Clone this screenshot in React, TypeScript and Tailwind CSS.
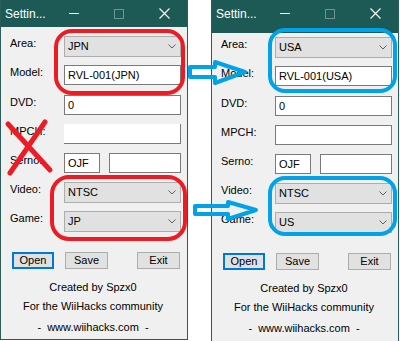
import React from "react";

type Row = { label: string; kind: "combo" | "input" | "serno"; value?: string; value2?: string; blank?: boolean };

const font = { fontFamily: '"Liberation Sans", Arial, sans-serif' };

function Chevron() {
  return (
    <svg width="8" height="5" viewBox="0 0 8 5" className="mr-[4px]">
      <path d="M0.5 0.5 L4 4 L7.5 0.5" fill="none" stroke="#606060" strokeWidth="1" />
    </svg>
  );
}

function Combo({ value }: { value: string }) {
  return (
    <div className="flex h-[21px] w-[117px] items-center justify-between border border-[#adadad] bg-[#e1e1e1] pl-[3px] text-[11px] text-black">
      <span>{value}</span>
      <Chevron />
    </div>
  );
}

function TextBox({ value, width, blank }: { value?: string; width: number; blank?: boolean }) {
  return (
    <div
      className={
        "flex h-[20px] items-center bg-white pl-[3px] text-[11px] text-black " +
        (blank ? "border-r border-b border-[#7a7a7a]" : "border border-[#7a7a7a]")
      }
      style={{ width }}
    >
      {value}
    </div>
  );
}

function TitleBar({ tall }: { tall?: boolean }) {
  return (
    <div className={"flex shrink-0 bg-[#1e5a55] text-white " + (tall ? "h-[33px]" : "h-[27px]")}>
      <div className="flex h-[27px] items-center">
        <span className="w-[60px] pl-[4px] text-[12px]">Settin...</span>
        <div className="ml-[8px] h-[1px] w-[10px] bg-white" />
        <div className="ml-[35px] h-[10px] w-[10px] border border-[#6d9692]" />
        <svg width="11" height="11" viewBox="0 0 11 11" className="ml-[35px]">
          <path d="M0.5 0.5 L10.5 10.5 M10.5 0.5 L0.5 10.5" stroke="white" strokeWidth="1.1" />
        </svg>
      </div>
    </div>
  );
}

function Settings({ rows, last }: { rows: Row[]; last?: boolean }) {
  return (
    <div
      className={
        "flex w-[188px] flex-col border-x border-[#2b5c57] bg-[#f0f0f0] " +
        (last ? "h-[341px]" : "h-[340px] border-b")
      }
      style={font}
    >
      <TitleBar tall={last} />
      <div className={"flex flex-col pl-[9px] " + (last ? "pt-[4px]" : "pt-[9px]")}>
        {rows.map((r, i) => (
          <div key={r.label} className={"flex h-[21px] items-start " + (i === 0 ? "" : i === 2 ? "mt-[9px]" : "mt-[8px]")}>
            <span className="w-[54px] pt-[1px] text-[11px] leading-[13px] text-black">{r.label}</span>
            {r.kind === "combo" && <Combo value={r.value || ""} />}
            {r.kind === "input" && <TextBox value={r.value} width={117} blank={r.blank} />}
            {r.kind === "serno" && (
              <div className="flex gap-[9px]">
                <TextBox value={r.value} width={36} />
                <TextBox value={r.value2} width={72} />
              </div>
            )}
          </div>
        ))}
        <div className="mt-[20px] flex h-[17px] text-[11px] text-black">
          <div className="ml-[2px] flex w-[42px] items-center justify-center border-2 border-[#0078d7] bg-[#e1e1e1]">Open</div>
          <div className="ml-[11px] flex w-[43px] items-center justify-center border border-[#adadad] bg-[#e1e1e1]">Save</div>
          <div className="ml-[29px] flex w-[43px] items-center justify-center border border-[#adadad] bg-[#e1e1e1]">Exit</div>
        </div>
      </div>
      <div className="flex flex-col items-center pr-[2px] text-[11px] leading-[13px] text-black">
        <span className="mt-[12px]">Created by Spzx0</span>
        <span className="mt-[6px]">For the WiiHacks community</span>
        <span className="mt-[8px] whitespace-pre">-  www.wiihacks.com  -</span>
      </div>
    </div>
  );
}

function Marks() {
  const red = "#ed1c24";
  const blue = "#00a2e8";
  return (
    <svg width="400" height="341" viewBox="0 0 400 341" className="pointer-events-none absolute left-0 top-0">
      <rect x="56" y="31" width="127" height="62" rx="16" fill="none" stroke={red} strokeWidth="4" />
      <rect x="52" y="177" width="133" height="62" rx="17" fill="none" stroke={red} strokeWidth="4" />
      <path d="M8 124 L50 170 M45 122 L10 173" stroke={red} strokeWidth="5" strokeLinecap="round" />
      <rect x="270" y="30" width="125" height="61" rx="15" fill="none" stroke={blue} strokeWidth="4" />
      <rect x="270" y="178" width="125" height="56" rx="15" fill="none" stroke={blue} strokeWidth="4" />
      <path
        d="M190 67 L215 67 L215 62 L245 72 L215 83 L215 77 L190 77 Z"
        fill="none"
        stroke={blue}
        strokeWidth="4"
        strokeLinejoin="round"
      />
      <path
        d="M195 206 L228 206 L228 202 L256 210 L228 219 L228 214 L195 214 Z"
        fill="none"
        stroke={blue}
        strokeWidth="4"
        strokeLinejoin="round"
      />
    </svg>
  );
}

const left: Row[] = [
  { label: "Area:", kind: "combo", value: "JPN" },
  { label: "Model:", kind: "input", value: "RVL-001(JPN)" },
  { label: "DVD:", kind: "input", value: "0" },
  { label: "MPCH:", kind: "input", blank: true },
  { label: "Serno:", kind: "serno", value: "OJF" },
  { label: "Video:", kind: "combo", value: "NTSC" },
  { label: "Game:", kind: "combo", value: "JP" },
];

const right: Row[] = [
  { label: "Area:", kind: "combo", value: "USA" },
  { label: "Model:", kind: "input", value: "RVL-001(USA)" },
  { label: "DVD:", kind: "input", value: "0" },
  { label: "MPCH:", kind: "input" },
  { label: "Serno:", kind: "serno", value: "OJF" },
  { label: "Video:", kind: "combo", value: "NTSC" },
  { label: "Game:", kind: "combo", value: "US" },
];

export default function App() {
  return (
    <div className="relative flex h-[341px] w-[400px] overflow-hidden bg-white">
      <Settings rows={left} />
      <div className="w-[23px]" />
      <Settings rows={right} last />
      <Marks />
    </div>
  );
}
